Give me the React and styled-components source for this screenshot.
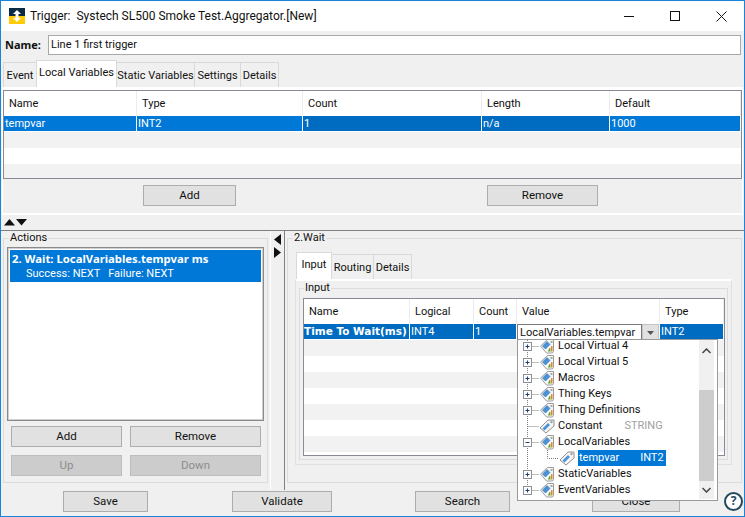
import React from 'react';
import styled, { createGlobalStyle } from 'styled-components';

const Global = createGlobalStyle`
  html, body { margin: 0; padding: 0; background: #f0f0f0; }
  * { box-sizing: border-box; }
  body { font-family: Roboto, "Noto Sans", sans-serif; font-size: 11px; color: #111; }
`;

const Window = styled.div`
  position: relative;
  width: 745px;
  height: 517px;
  overflow: hidden;
  display: flex;
  flex-direction: column;
  background: #f0f0f0;
  border: 1px solid #1a84d8;
`;

const TitleBar = styled.div`
  height: 30px;
  flex: none;
  display: flex;
  align-items: center;
  background: #fff;
  padding-left: 8px;
`;
const TitleText = styled.span`
  margin-left: 5px;
  font-size: 12px;
  white-space: pre;
  flex: 1;
`;
const WinButton = styled.div`
  width: 46px;
  height: 30px;
  display: flex;
  align-items: center;
  justify-content: center;
`;

const NameRow = styled.div`
  height: 29px;
  flex: none;
  display: flex;
  align-items: flex-start;
  padding: 4px 3px 0 4px;
`;
const NameLabel = styled.label`
  width: 43px;
  font-family: "Noto Sans", sans-serif;
  font-weight: 700;
  font-size: 11px;
  line-height: 20px;
`;
const NameInput = styled.div`
  flex: 1;
  height: 20px;
  line-height: 18px;
  padding-left: 2px;
  background: #fff;
  border: 1px solid #a9a9a9;
`;

const TabBar = styled.div`
  flex: none;
  height: ${p => p.$h || 27}px;
  display: flex;
  align-items: flex-end;
  padding-left: ${p => p.$left || 3}px;
`;
const Tab = styled.div`
  width: ${p => p.$w}px;
  height: ${p => (p.$active ? 27 : 25)}px;
  line-height: ${p => (p.$active ? 24 : 25)}px;
  text-align: center;
  white-space: nowrap;
  background: ${p => (p.$active ? '#fff' : '#f0f0f0')};
  border: 1px solid #d9d9d9;
  border-bottom: none;
  margin-left: -1px;
`;

const TopPanel = styled.div`
  flex: none;
  height: 128px;
  margin: 0 1px;
  border: 1px solid #fff;
  border-top-width: 3px;
  border-bottom-width: 2px;
`;
const Table = styled.div`
  height: ${p => p.$h}px;
  overflow: hidden;
  border: 1px solid #8a8a96;
  background: #fff;
`;
const Row = styled.div`
  display: grid;
  grid-template-columns: ${p => p.$cols};
  height: ${p => p.$h || 16}px;
  background: ${p => (p.$stripe ? '#f2f2f2' : '#fff')};
`;
const HeadCell = styled.div`
  padding-left: 5px;
  line-height: 26px;
  background: #fff;
  border-right: 1px solid #ececec;
  white-space: nowrap;
`;
const Cell = styled.div`
  height: 15px;
  padding-left: ${p => (p.$tight ? 1 : 0)}px;
  line-height: 15px;
  color: #fff;
  white-space: nowrap;
  overflow: ${p => (p.$open ? 'visible' : 'hidden')};
  font-weight: ${p => (p.$bold ? 700 : 400)};
  font-family: ${p => (p.$bold ? '"DejaVu Sans", sans-serif' : 'inherit')};
  font-size: ${p => (p.$bold ? '10.500px' : 'inherit')};
  background: ${p => (p.$dark ? '#006cc1' : '#0078d7')};
  border-right: 1px solid #fff;
`;
const TableActions = styled.div`
  display: flex;
  padding: 6px 0 0 140px;
`;
const Button = styled.div`
  flex: none;
  width: ${p => p.$w}px;
  height: 21px;
  margin-left: ${p => p.$gap || 0}px;
  line-height: 18px;
  text-align: center;
  font-size: 11.500px;
  color: ${p => (p.$disabled ? '#8c8c8c' : '#111')};
  background: ${p => (p.$disabled ? '#cccccc' : '#e1e1e1')};
  border: 1px solid ${p => (p.$disabled ? '#bdbdbd' : '#adadad')};
`;

const Splitter = styled.div`
  flex: none;
  height: 16px;
  padding: 4px 0 0 3px;
  border-bottom: 1px solid #808080;
  svg { display: block; }
`;

const Main = styled.div`
  flex: none;
  height: 259px;
  display: flex;
`;
const LeftCol = styled.div`
  width: 270px;
  padding: 0 2px;
  border-right: 1px solid #fff;
`;
const VSplit = styled.div`
  width: 14px;
  padding: 3px 0 0 3px;
  border-right: 1px solid #808080;
  svg { display: block; }
`;
const RightCol = styled.div`
  flex: 1;
  padding: 0 2px;
`;
const Group = styled.fieldset`
  margin: 0;
  padding: ${p => p.$pad};
  height: ${p => p.$h}px;
  min-width: 0;
  border: 1px solid #dcdcdc;
`;
const Legend = styled.legend`
  margin-left: ${p => p.$left}px;
  padding: 0 1px;
  line-height: 14px;
`;
const ActionList = styled.div`
  height: 174px;
  padding: 2px;
  background: #fff;
  border: 1px solid #8a8a8a;
  box-shadow: inset 0 0 0 1px #cfcfcf;
`;
const ActionItem = styled.div`
  height: 32px;
  padding: 1px 0 0 2px;
  color: #fff;
  background: #0078d7;
`;
const ActionTitle = styled.div`
  font-family: "Noto Sans", sans-serif;
  font-weight: 700;
  font-size: 11.300px;
  line-height: 15px;
  white-space: nowrap;
`;
const ActionSub = styled.div`
  padding-left: 14px;
  line-height: 16px;
  white-space: pre;
`;
const ActionButtons = styled.div`
  display: grid;
  grid-template-columns: 111px 131px;
  gap: 8px;
  padding: 5px 0 0 4px;
  ${Button} { width: auto; }
`;

const TabPanel = styled.div`
  height: 186px;
  margin-left: 7px;
  width: 437px;
  padding: 0 3px;
  background: #f0f0f0;
  border: 1px solid #e0e0e0;
  border-top: 2px solid #fff;
`;

const Footer = styled.div`
  flex: none;
  height: 26px;
  display: flex;
  padding: 1px 0 0 62px;
`;
const Help = styled.div`
  width: 19px;
  height: 19px;
  margin: 1px 0 0 44px;
  border-radius: 50%;
  border: 2px solid #24495c;
  color: #24495c;
  background: #fff;
  font-family: "Noto Sans", sans-serif;
  font-weight: 700;
  font-size: 12px;
  line-height: 14px;
  text-align: center;
`;

const ComboWrap = styled.div`
  display: flex;
  height: 18px;
  background: #e6e6e6;
`;
const ComboInput = styled.div`
  flex: 1;
  height: 18px;
  padding-left: 2px;
  line-height: 16px;
  color: #111;
  overflow: hidden;
  background: #fff;
  border: 1px solid #7a7a7a;
`;
const ComboButton = styled.div`
  width: 17px;
  display: flex;
  align-items: center;
  justify-content: center;
  background: #e1e1e1;
  border: 1px solid #c4c4c4;
`;

const Popup = styled.div`
  position: absolute;
  left: 516px;
  top: 338px;
  width: 201px;
  height: 162px;
  display: flex;
  padding: 0 3px 1px 0;
  background: #fff;
  border: 1px solid #9a9a9a;
`;
const Tree = styled.div`
  flex: 1;
  overflow: hidden;
  padding-left: 3px;
`;
const TreeInner = styled.div`
  margin-top: -2px;
`;
const TreeRow = styled.div`
  height: 16px;
  display: flex;
  align-items: center;
  white-space: nowrap;
  svg { display: block; flex: none; }
`;
const TreeLabel = styled.span`
  display: flex;
  height: 16px;
  line-height: 15px;
  margin-left: ${p => (p.$selected ? 3 : 2)}px;
  padding: 0 2px 0 1px;
  color: ${p => (p.$selected ? '#fff' : '#111')};
  background: ${p => (p.$selected ? '#0078d7' : 'transparent')};
`;
const TreeType = styled.span`
  margin-left: ${p => p.$gap}px;
  color: ${p => (p.$selected ? '#fff' : '#a0a0a0')};
`;
const ScrollBar = styled.div`
  flex: none;
  width: 15px;
  display: flex;
  flex-direction: column;
  align-items: center;
  background: #f0f0f0;
`;
const ScrollArrow = styled.div`
  flex: none;
  height: ${p => p.$h}px;
  svg { display: block; margin-top: ${p => p.$top}px; }
`;
const ScrollThumb = styled.div`
  flex: none;
  width: 100%;
  height: 91px;
  background: #cdcdcd;
`;

function Logo() {
  return (
    <svg width="16" height="16" viewBox="0 0 16 16">
      <rect width="16" height="8" fill="#0b2b45" />
      <rect y="8" width="16" height="8" fill="#ffcb05" />
      <path d="M8 2l4 4h-2.500v4H12l-4 4-4-4h2.500V6H4z" fill="#fff" />
    </svg>
  );
}

function Triangle({ dir, size = 11 }) {
  const h = size / 2;
  const paths = {
    up: `M0 ${h + 1}L${h} 0L${size} ${h + 1}z`,
    down: `M0 0L${size} 0L${h} ${h + 1}z`,
  };
  return <path d={paths[dir]} fill="#111" />;
}

function GroupIcon() {
  return (
    <svg width="16" height="16" viewBox="0 0 16 16">
      <path d="M1.500 8L8.500 1.500h6v12l-1 1.500h-6z" fill="#f6f6f6" stroke="#9c9c9c" />
      <path d="M3.500 8L8 3.500l3 3L6.500 11z" fill="#4a93d6" stroke="#2a6fb5" strokeWidth=".6" />
      <rect x="11.500" y="3" width="2" height="2" fill="#a8a8a8" />
      <path d="M9 13.500L10.500 10h1v3.500z" fill="#59a52c" />
      <path d="M12 13.500V8h1.500v5.500z" fill="#e8862a" />
    </svg>
  );
}

function TagIcon() {
  return (
    <svg width="16" height="16" viewBox="0 0 16 16">
      <path d="M1 10L9 2h6v6l-8 7z" fill="#f6f6f6" stroke="#8f8f8f" />
      <path d="M3.500 10.500L9 5l2 2-5.500 5.500z" fill="#4a93d6" />
      <circle cx="12.500" cy="4" r="1.200" fill="#a0a0a0" />
    </svg>
  );
}

// gutter with the dotted tree lines and the +/- box
function Gutter({ kind, last }) {
  const dots = { stroke: '#7d7d7d', strokeDasharray: '1 1', fill: 'none' };
  if (kind === 'child') {
    return (
      <svg width="38" height="16" viewBox="0 0 38 16">
        <path d="M6.500 0V16" {...dots} />
        <path d="M26.500 0V8.500H38" {...dots} />
      </svg>
    );
  }
  return (
    <svg width="18" height="16" viewBox="0 0 18 16">
      <path d={last ? 'M6.500 0V8' : 'M6.500 0V16'} {...dots} />
      <path d="M6.500 8.500H18" {...dots} />
      {kind !== 'leaf' && (
        <>
          <rect x="2.500" y="4.500" width="8" height="8" fill="#fff" stroke="#8a8f99" />
          <path d={kind === 'open' ? 'M4.500 8.500h4' : 'M4.500 8.500h4M6.500 6.500v4'} stroke="#1f3f7a" />
        </>
      )}
    </svg>
  );
}

const cols1 = '133px 166px 179px 128px 1fr';
const cols2 = '106px 64px 43px 143px 1fr';

const treeRows = [
  { label: 'Local Virtual 4', kind: 'closed' },
  { label: 'Local Virtual 5', kind: 'closed' },
  { label: 'Macros', kind: 'closed' },
  { label: 'Thing Keys', kind: 'closed' },
  { label: 'Thing Definitions', kind: 'closed' },
  { label: 'Constant', kind: 'leaf', type: 'STRING', gap: 22, tag: true },
  { label: 'LocalVariables', kind: 'open' },
  { label: 'tempvar', kind: 'child', type: 'INT2', gap: 21, tag: true, selected: true },
  { label: 'StaticVariables', kind: 'closed' },
  { label: 'EventVariables', kind: 'closed', last: true },
];

export default function App() {
  return (
    <Window>
      <Global />
      <TitleBar>
        <Logo />
        <TitleText>Trigger:  Systech SL500 Smoke Test.Aggregator.[New]</TitleText>
        <WinButton>
          <svg width="10" height="10"><path d="M0 5.500H10" stroke="#111" /></svg>
        </WinButton>
        <WinButton>
          <svg width="10" height="10"><rect x=".5" y=".5" width="9" height="9" fill="none" stroke="#111" /></svg>
        </WinButton>
        <WinButton>
          <svg width="11" height="11"><path d="M.5.500l10 10M10.500.500l-10 10" stroke="#111" /></svg>
        </WinButton>
      </TitleBar>

      <NameRow>
        <NameLabel>Name:</NameLabel>
        <NameInput>Line 1 first trigger</NameInput>
      </NameRow>

      <TabBar>
        <Tab $w={34}>Event</Tab>
        <Tab $w={81} $active>Local Variables</Tab>
        <Tab $w={79}>Static Variables</Tab>
        <Tab $w={47}>Settings</Tab>
        <Tab $w={39}>Details</Tab>
      </TabBar>

      <TopPanel>
        <Table $h={89}>
          <Row $cols={cols1} $h={25}>
            {['Name', 'Type', 'Count', 'Length', 'Default'].map(h => <HeadCell key={h}>{h}</HeadCell>)}
          </Row>
          <Row $cols={cols1}>
            <Cell $tight>tempvar</Cell>
            <Cell $tight>INT2</Cell>
            <Cell $tight $dark>1</Cell>
            <Cell $tight $dark>n/a</Cell>
            <Cell $tight>1000</Cell>
          </Row>
          <Row $cols={cols1} $stripe />
          <Row $cols={cols1} />
          <Row $cols={cols1} $stripe />
        </Table>
        <TableActions>
          <Button $w={93}>Add</Button>
          <Button $w={111} $gap={251}>Remove</Button>
        </TableActions>
      </TopPanel>

      <Splitter>
        <svg width="24" height="7" viewBox="0 0 24 7">
          <Triangle dir="up" />
          <g transform="translate(12 0)"><Triangle dir="down" /></g>
        </svg>
      </Splitter>

      <Main>
        <LeftCol>
          <Group $h={252} $pad="2px 3px 0 3px">
            <Legend $left={2}>Actions</Legend>
            <ActionList>
              <ActionItem>
                <ActionTitle>2. Wait: LocalVariables.tempvar ms</ActionTitle>
                <ActionSub>Success: NEXT   Failure: NEXT</ActionSub>
              </ActionItem>
            </ActionList>
            <ActionButtons>
              <Button>Add</Button>
              <Button>Remove</Button>
              <Button $disabled>Up</Button>
              <Button $disabled>Down</Button>
            </ActionButtons>
          </Group>
        </LeftCol>
        <VSplit>
          <svg width="7" height="24" viewBox="0 0 7 24">
            <path d="M7 0V11L0 5.500z" fill="#111" />
            <path d="M0 13V24L7 18.500z" fill="#111" />
          </svg>
        </VSplit>
        <RightCol>
          <Group $h={252} $pad="0">
            <Legend $left={5}>2.Wait</Legend>
            <TabBar $h={34} $left={9}>
              <Tab $w={36} $active>Input</Tab>
              <Tab $w={43}>Routing</Tab>
              <Tab $w={39}>Details</Tab>
            </TabBar>
            <TabPanel>
              <Group $h={179} $pad="3px 2px 0 3px">
                <Legend $left={1}>Input</Legend>
                <Table $h={158}>
                  <Row $cols={cols2} $h={25}>
                    {['Name', 'Logical', 'Count', 'Value', 'Type'].map(h => <HeadCell key={h}>{h}</HeadCell>)}
                  </Row>
                  <Row $cols={cols2}>
                    <Cell $dark $bold>Time To Wait(ms)</Cell>
                    <Cell $dark $tight>INT4</Cell>
                    <Cell $dark $tight>1</Cell>
                    <Cell $open>
                      <ComboWrap>
                        <ComboInput>LocalVariables.tempvar</ComboInput>
                        <ComboButton>
                          <svg width="7" height="4"><path d="M0 0H7L3.500 4z" fill="#555" /></svg>
                        </ComboButton>
                      </ComboWrap>
                    </Cell>
                    <Cell $dark $tight>INT2</Cell>
                  </Row>
                  {[1, 0, 1, 0, 1, 0, 1].map((s, i) => <Row key={i} $cols={cols2} $stripe={!!s} />)}
                </Table>
              </Group>
            </TabPanel>
          </Group>
        </RightCol>
      </Main>

      <Footer>
        <Button $w={85}>Save</Button>
        <Button $w={100} $gap={84}>Validate</Button>
        <Button $w={95} $gap={83}>Search</Button>
        <Button $w={88} $gap={82}>Close</Button>
        <Help>?</Help>
      </Footer>

      <Popup>
        <Tree>
          <TreeInner>
            {treeRows.map(r => (
              <TreeRow key={r.label}>
                <Gutter kind={r.kind} last={r.last} />
                {r.tag ? <TagIcon /> : <GroupIcon />}
                <TreeLabel $selected={r.selected}>
                  {r.label}
                  {r.type && <TreeType $gap={r.gap} $selected={r.selected}>{r.type}</TreeType>}
                </TreeLabel>
              </TreeRow>
            ))}
          </TreeInner>
        </Tree>
        <ScrollBar>
          <ScrollArrow $h={50} $top={8}>
            <svg width="9" height="6"><path d="M.5 5L4.500 1l4 4" fill="none" stroke="#444" strokeWidth="1.500" /></svg>
          </ScrollArrow>
          <ScrollThumb />
          <ScrollArrow $h={18} $top={6}>
            <svg width="9" height="6"><path d="M.5 1l4 4 4-4" fill="none" stroke="#444" strokeWidth="1.500" /></svg>
          </ScrollArrow>
        </ScrollBar>
      </Popup>
    </Window>
  );
}
